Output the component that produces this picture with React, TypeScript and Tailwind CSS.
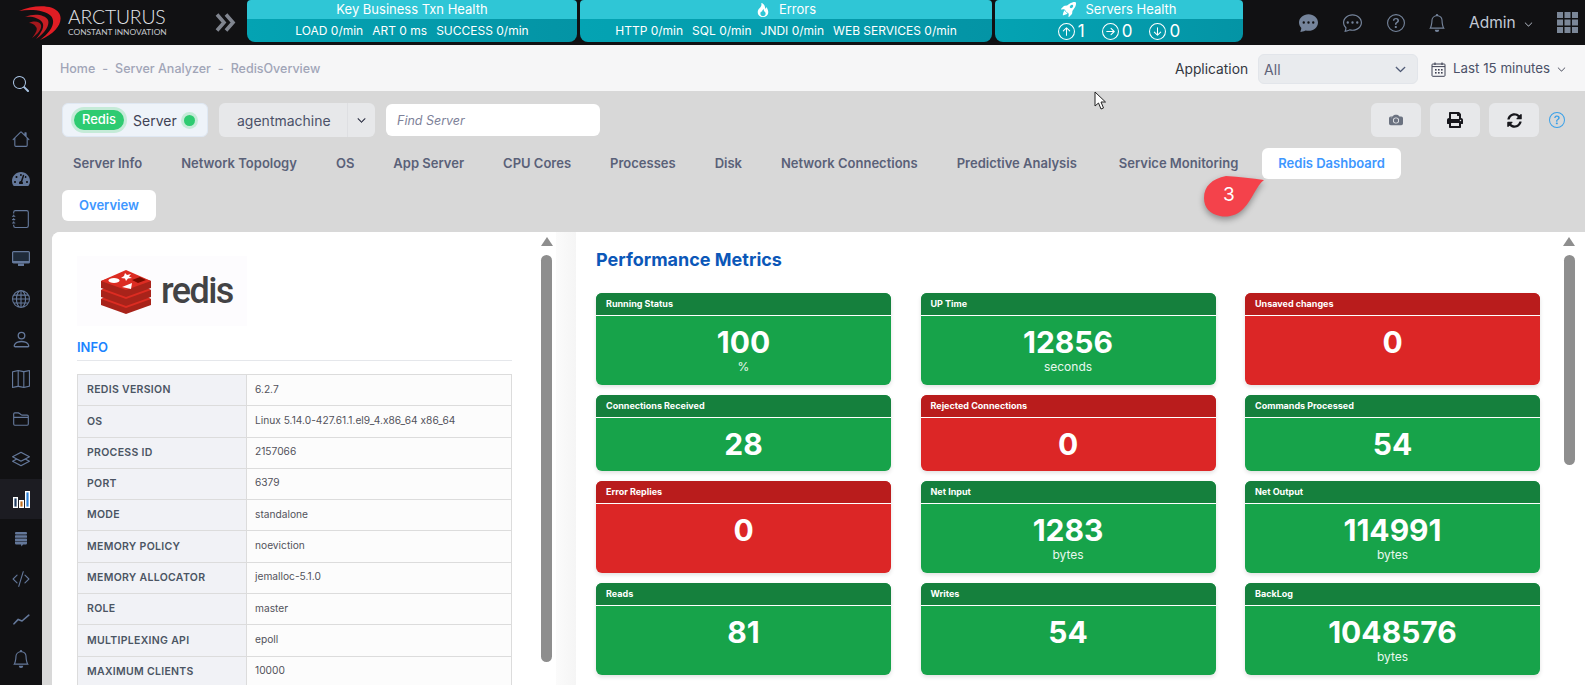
import React from "react";
import { BsChatDotsFill, BsChatDots, BsQuestionCircle, BsBell, BsCameraFill, BsArrowUpCircle, BsArrowRightCircle, BsArrowDownCircle, BsSearch, BsHouse, BsJournal, BsGlobe, BsPerson, BsMap, BsFolder2, BsLayers, BsCodeSlash, BsChevronDown, BsFire, BsRocketTakeoffFill } from "react-icons/bs";
import { FaPrint, FaSyncAlt, FaTachometerAlt } from "react-icons/fa";

const tabs = ["Server Info", "Network Topology", "OS", "App Server", "CPU Cores", "Processes", "Disk", "Network Connections", "Predictive Analysis"];
const info: [string, string][] = [
  ["REDIS VERSION", "6.2.7"],
  ["OS", "Linux 5.14.0-427.61.1.el9_4.x86_64 x86_64"],
  ["PROCESS ID", "2157066"],
  ["PORT", "6379"],
  ["MODE", "standalone"],
  ["MEMORY POLICY", "noeviction"],
  ["MEMORY ALLOCATOR", "jemalloc-5.1.0"],
  ["ROLE", "master"],
  ["MULTIPLEXING API", "epoll"],
  ["MAXIMUM CLIENTS", "10000"],
];
type M = { t: string; v: string; u?: string; red?: boolean };
const metrics: M[] = [
  { t: "Running Status", v: "100", u: "%" },
  { t: "UP Time", v: "12856", u: "seconds" },
  { t: "Unsaved changes", v: "0", red: true },
  { t: "Connections Received", v: "28" },
  { t: "Rejected Connections", v: "0", red: true },
  { t: "Commands Processed", v: "54" },
  { t: "Error Replies", v: "0", red: true },
  { t: "Net Input", v: "1283", u: "bytes" },
  { t: "Net Output", v: "114991", u: "bytes" },
  { t: "Reads", v: "81" },
  { t: "Writes", v: "54" },
  { t: "BackLog", v: "1048576", u: "bytes" },
];

function Swoosh() {
  return (
    <svg width="44" height="36" viewBox="0 0 44 36" className="shrink-0">
      <path d="M0 6 C14 0 34 -1 40 8 C45 16 38 28 21 35 C33 26 37 17 32 11 C26 5 12 4 0 6Z" fill="#e11d24" />
      <path d="M6 12 C16 8 26 10 29 15 C31 20 26 28 17 34 C23 27 26 21 23 17 C20 13 13 11 6 12Z" fill="#c81e24" />
      <path d="M10 18 C16 15 21 17 22 20 C23 24 19 29 13 33 C17 28 19 24 17 22 C15 19 13 18 10 18Z" fill="#a5181d" />
    </svg>
  );
}

function DoubleChevron() {
  return (
    <svg width="21" height="19" viewBox="0 0 21 19" fill="none" stroke="#80858f" strokeWidth="3.6" className="shrink-0">
      <path d="M2 1.5 L9 9.5 L2 17.5" />
      <path d="M11 1.5 L18 9.5 L11 17.5" />
    </svg>
  );
}

function RedisCube() {
  return (
    <svg width="52" height="45" viewBox="0 0 52 45">
      <path d="M1 30 L26 20 L51 30 L51 36 L26 45 L1 36Z" fill="#a8231a" />
      <path d="M1 30 L26 21 L51 30 L26 39Z" fill="#dc2c22" />
      <path d="M1 21 L26 11 L51 21 L51 28 L26 37 L1 28Z" fill="#a8231a" />
      <path d="M1 21 L26 12 L51 21 L26 30Z" fill="#dc2c22" />
      <path d="M1 12 L26 3 L51 12 L51 19 L26 28 L1 19Z" fill="#a8231a" />
      <path d="M1 12 L26 1 L51 12 L26 21Z" fill="#dc2c22" />
      <ellipse cx="14" cy="11.5" rx="5.5" ry="2.5" fill="#fff" />
      <path d="M25 4 L27 6 L31 5 L29 7.5 L32 9 L28 9.5 L26 12 L25 9.5 L21 9 L24 7Z" fill="#fff" />
      <path d="M22 18 L32 14 L31 20Z" fill="#fff" />
      <path d="M32 11 L40 8 L46 11 L38 14Z" fill="#7a0c00" />
    </svg>
  );
}

function CalendarIcon() {
  const xs = [4, 7, 10];
  const ys = [7, 10];
  return (
    <svg width="15" height="15" viewBox="0 0 15 15" fill="none" stroke="#3f4254" className="ml-[13px] shrink-0">
      <rect x="1" y="2" width="13" height="12.3" rx="0.8" strokeWidth="1" />
      <path d="M4 0.5 V3 M11 0.5 V3" strokeWidth="1.2" />
      <path d="M1 4.6 H14" strokeWidth="1" />
      {ys.map((y) => xs.map((x) => <rect key={`${x}-${y}`} x={x} y={y} width="1.6" height="1.6" fill="#3f4254" stroke="none" />))}
    </svg>
  );
}

function BarsIcon() {
  return (
    <svg width="17" height="17" viewBox="0 0 17 17">
      <rect x="0.7" y="6.7" width="3.6" height="9.6" fill="#1e3a5f" stroke="#fff" strokeWidth="1.4" />
      <rect x="6.7" y="9.7" width="3.6" height="6.6" fill="#c2701f" stroke="#fff" strokeWidth="1.4" />
      <rect x="12.7" y="0.7" width="3.6" height="15.6" fill="#2b7fd6" stroke="#fff" strokeWidth="1.4" />
    </svg>
  );
}

function MonitorIcon() {
  return (
    <svg width="18" height="16" viewBox="0 0 18 16">
      <rect x="0.6" y="0.6" width="16.8" height="11.3" rx="1" fill="#1f2b3a" stroke="#64789a" strokeWidth="1.2" />
      <rect x="0.6" y="10" width="16.8" height="2" fill="#64789a" />
      <rect x="6" y="12.5" width="6" height="2.5" fill="#64789a" />
    </svg>
  );
}

function StackIcon() {
  return (
    <svg width="12" height="15" viewBox="0 0 12 15" fill="#64789a">
      <rect x="0" y="0" width="12" height="2.6" rx="1" />
      <rect x="0" y="3.2" width="12" height="2.6" rx="0.6" />
      <rect x="0" y="6.4" width="12" height="2.6" rx="0.6" />
      <path d="M0 9.6 H12 V11.2 Q12 12.4 10.8 12.4 H8 L6.5 14.6 L6 12.4 H1.2 Q0 12.4 0 11.2Z" />
    </svg>
  );
}

function TrendIcon() {
  return (
    <svg width="17" height="11" viewBox="0 0 17 11" fill="none" stroke="#64789a" strokeWidth="1.6" strokeLinecap="round" strokeLinejoin="round">
      <path d="M1 9.8 L5.2 5.4 L9 7 L15.8 1.2" />
    </svg>
  );
}

function GridIcon() {
  const c = [0, 7.5, 15];
  return (
    <svg width="21" height="21" viewBox="0 0 21 21" fill="#7b8798">
      {c.map((y) => c.map((x) => <rect key={`${x}-${y}`} x={x} y={y} width="6" height="6" />))}
    </svg>
  );
}

function Health({ w, title, icon, children }: { w: string; title: string; icon?: React.ReactNode; children: React.ReactNode }) {
  return (
    <div className={`${w} h-[42px] rounded-b-lg rounded-t-sm overflow-hidden flex flex-col text-white`}>
      <div className="h-[19px] bg-[#2fc6d6] flex items-center justify-center gap-[9px] text-[13px] leading-none">
        {icon}
        <span>{title}</span>
      </div>
      <div className="flex-1 bg-gradient-to-r from-[#04a3b3] to-[#0494a5] flex items-center justify-center gap-[9px] text-[12px] leading-none pt-[1px]">
        {children}
      </div>
    </div>
  );
}

function Nav({ children, active }: { children: React.ReactNode; active?: boolean }) {
  return (
    <div className={`h-[40px] flex items-center justify-center text-[18px] text-[#64789a] ${active ? "bg-[#1c1c22]" : ""}`}>{children}</div>
  );
}

function Metric({ m }: { m: M }) {
  return (
    <div className={`rounded-md overflow-hidden flex flex-col text-white shadow-[0_2px_4px_rgba(0,0,0,0.12)] ${m.red ? "bg-[#dc2626]" : "bg-[#17a34a]"}`}>
      <div className={`h-[23px] shrink-0 px-[10px] flex items-center border-b border-white text-[9px] font-bold ${m.red ? "bg-[#b91c1c]" : "bg-[#15803d]"}`}>{m.t}</div>
      <div className="flex-1 flex flex-col items-center pt-[8px] pb-[9px]">
        <div className="text-[30px] font-bold leading-[36px]">{m.v}</div>
        {m.u && <div className="text-[12px] leading-[16px] mt-[-1px] mb-[1px] text-[#e8f8ee]">{m.u}</div>}
      </div>
    </div>
  );
}

export default function App() {
  return (
    <div className="w-[1585px] h-[685px] overflow-hidden flex flex-col relative font-['Inter',sans-serif] bg-[#111113]">
      <header className="h-[45px] shrink-0 flex bg-[#111113]">
        <div className="w-[247px] shrink-0 flex items-center pl-[19px]">
          <Swoosh />
          <div className="ml-[5px] w-[100px] flex flex-col text-[#e5e7eb] font-['Lato',sans-serif] whitespace-nowrap pb-[2px]">
            <span className="text-[19.4px] font-light leading-[20px] tracking-[-0.2px]">ARCTURUS</span>
            <span className="text-[8.4px] leading-[10px] text-[#c4c7cc]">CONSTANT INNOVATION</span>
          </div>
          <span className="ml-[47px]"><DoubleChevron /></span>
        </div>
        <div className="flex gap-[3px]">
          <Health w="w-[330px]" title="Key Business Txn Health">
            <span>LOAD 0/min</span><span>ART 0 ms</span><span>SUCCESS 0/min</span>
          </Health>
          <Health w="w-[412px]" title="Errors" icon={<BsFire className="text-[14px]" />}>
            <span>HTTP 0/min</span><span>SQL 0/min</span><span>JNDI 0/min</span><span>WEB SERVICES 0/min</span>
          </Health>
          <Health w="w-[248px]" title="Servers Health" icon={<BsRocketTakeoffFill className="text-[15px]" />}>
            <span className="flex items-center gap-[3px] text-[17px]"><BsArrowUpCircle className="text-[17px]" />1</span>
            <span className="flex items-center gap-[3px] text-[17px] ml-[8px]"><BsArrowRightCircle className="text-[17px]" />0</span>
            <span className="flex items-center gap-[3px] text-[17px] ml-[8px]"><BsArrowDownCircle className="text-[17px]" />0</span>
          </Health>
        </div>
        <div className="flex items-center text-[#75849b] ml-[56px]">
          <BsChatDotsFill className="text-[19px]" />
          <BsChatDots className="text-[19px] ml-[25px]" />
          <BsQuestionCircle className="text-[18px] ml-[25px]" />
          <BsBell className="text-[18px] ml-[23px]" />
          <span className="ml-[23px] text-[15.5px] text-[#c3cad6]">Admin</span>
          <BsChevronDown className="text-[9px] ml-[8px] mt-[3px] text-[#c3cad6]" />
          <span className="ml-[24px]"><GridIcon /></span>
        </div>
      </header>

      <div className="flex-1 flex min-h-0">
        <aside className="w-[42px] shrink-0 bg-[#111113] flex flex-col pt-[19px]">
          <div className="mb-[15px]"><Nav><BsSearch className="text-[16px] text-[#a9c4e4]" /></Nav></div>
          <Nav><BsHouse /></Nav>
          <Nav><FaTachometerAlt /></Nav>
          <Nav><BsJournal /></Nav>
          <Nav><MonitorIcon /></Nav>
          <Nav><BsGlobe /></Nav>
          <Nav><BsPerson className="text-[21px]" /></Nav>
          <Nav><BsMap /></Nav>
          <Nav><BsFolder2 /></Nav>
          <Nav><BsLayers /></Nav>
          <Nav active><BarsIcon /></Nav>
          <Nav><StackIcon /></Nav>
          <Nav><BsCodeSlash /></Nav>
          <Nav><TrendIcon /></Nav>
          <Nav><BsBell /></Nav>
        </aside>

        <main className="flex-1 min-w-0 bg-[#d8d8d8] flex flex-col">
          <div className="h-[46px] shrink-0 bg-[#f6f6f7] flex items-center pt-[2px] pl-[18px] pr-[17px]">
            <div className="flex gap-[7px] text-[12.5px] font-medium text-[#a1a5b7]">
              <span>Home</span><span>-</span><span>Server Analyzer</span><span>-</span><span>RedisOverview</span>
            </div>
            <span className="ml-auto text-[13.8px] text-[#33363f]">Application</span>
            <div className="ml-[10px] w-[160px] h-[30px] rounded-md bg-[#e9ebee] border border-[#e2e5ea] flex items-center justify-between px-[5px] pr-[11px] text-[14px] text-[#5e6278]">
              <span>All</span>
              <BsChevronDown className="text-[11px] text-[#3f4a68] stroke-[1px]" />
            </div>
            <CalendarIcon />
            <span className="ml-[7px] text-[13.3px] text-[#4b5168]">Last 15 minutes</span>
            <BsChevronDown className="ml-[7px] mr-[2px] text-[9px] text-[#3f4254]" />
          </div>

          <div className="mt-[12px] h-[34px] shrink-0 flex items-center pl-[20px] pr-[20px]">
            <div className="w-[146px] h-[34px] rounded-md bg-[#eef3f9] border border-[#dfe8f3] flex items-center pl-[11px]">
              <span className="h-[20px] w-[50px] rounded-full bg-[#2ecb71] text-white text-[13px] font-medium flex items-center justify-center ring-[3px] ring-[#c5ebd8]">Redis</span>
              <span className="ml-[9px] text-[14px] text-[#3f4254] pt-[1px]">Server</span>
              <span className="ml-[7px] w-[11px] h-[11px] rounded-full bg-[#2ecb71] ring-[3px] ring-[#c5ebd8]"></span>
            </div>
            <div className="ml-[11px] w-[156px] h-[34px] rounded-md bg-[#e7e8ea] flex items-center">
              <span className="w-[129px] h-full flex items-center pl-[18px] text-[14px] text-[#4b5168] border-r border-[#dedfe2]">agentmachine</span>
              <span className="flex-1 flex justify-center"><BsChevronDown className="text-[9px] text-[#3f4254] stroke-[1.5px]" /></span>
            </div>
            <div className="ml-[11px] w-[214px] h-[32px] rounded-md bg-white flex items-center pl-[11px] pt-[3px] text-[12.5px] italic text-[#7e8299]">Find Server</div>
            <div className="ml-auto flex gap-[9px] items-center">
              <div className="w-[50px] h-[34px] rounded-md bg-[#e7e8ea] flex items-center justify-center text-[14px] text-[#6b7280]"><BsCameraFill /></div>
              <div className="w-[50px] h-[34px] rounded-md bg-[#e7e8ea] flex items-center justify-center text-[16px] text-[#17171c]"><FaPrint /></div>
              <div className="w-[50px] h-[34px] rounded-md bg-[#e7e8ea] flex items-center justify-center text-[15px] text-[#17171c]"><FaSyncAlt /></div>
              <BsQuestionCircle className="ml-[1px] text-[16px] text-[#3aa0e8]" />
            </div>
          </div>

          <div className="mt-[11px] h-[31px] shrink-0 flex items-center gap-[7px] pl-[15px] text-[13px] font-semibold text-[#5a6178] whitespace-nowrap">
            {tabs.map((t) => (
              <span key={t} className="px-[16px] leading-[31px]">{t}</span>
            ))}
            <span className="ml-[3px] px-[16px] leading-[31px]">Service Monitoring</span>
            <span className="ml-[1px] px-[16px] leading-[31px] rounded-md bg-white text-[#3e97ff]">Redis Dashboard</span>
          </div>

          <div className="mt-[11px] h-[31px] shrink-0 pl-[20px] flex">
            <span className="px-[17px] leading-[31px] rounded-md bg-white text-[13px] font-semibold text-[#3e97ff]">Overview</span>
          </div>

          <div className="mt-[11px] flex-1 min-h-0 flex ml-[10px] overflow-hidden">
            <section className="w-[524px] shrink-0 relative bg-white rounded-tl-lg overflow-hidden flex">
              <div className="w-[504px] bg-white pl-[25px] pr-[44px] pt-[24px]">
                <div className="w-[170px] h-[70px] bg-[#fdfcfe] flex items-center pl-[23px]">
                  <RedisCube />
                  <span className="ml-[9px] text-[36px] font-['Roboto',sans-serif] font-medium leading-none tracking-[-1.6px] text-[#434345]">redis</span>
                </div>
                <div className="mt-[11px] pb-[3px] border-b border-[#e5e7eb] text-[13px] font-semibold leading-[20px] text-[#1b84ff]">INFO</div>
                <table className="mt-[13px] w-[435px] border-collapse text-[10.2px] table-fixed [font-feature-settings:'calt'_0]">
                  <tbody>
                    {info.map(([k, v]) => (
                      <tr key={k} className="h-[31.3px]">
                        <td className="w-[169px] border border-[#dcdcdc] bg-[#f1f2f6] pl-[9px] text-[10.5px] font-semibold tracking-[0.3px] text-[#4b5563]">{k}</td>
                        <td className="border border-[#dcdcdc] bg-[#fcfcfc] pl-[8px] pb-[2px] text-[#52525b]">{v}</td>
                      </tr>
                    ))}
                  </tbody>
                </table>
              </div>
              <div className="flex-1 bg-gradient-to-r from-[#fbfbfb] to-[#f5f5f5]"></div>
              <div className="absolute left-[489px] top-[5px] w-0 h-0 border-l-[6px] border-r-[6px] border-b-[9px] border-l-transparent border-r-transparent border-b-[#8e8e8e]"></div>
              <div className="absolute left-[489px] top-[23px] w-[11px] h-[407px] rounded-full bg-[#8e8e8e]"></div>
            </section>
            <section className="flex-1 relative bg-white pl-[20px] pt-[15px]">
              <h2 className="text-[18px] font-bold leading-[26px] text-[#0b57b8]">Performance Metrics</h2>
              <div className="mt-[20px] grid grid-cols-[295px_295px_295px] gap-x-[29.5px] gap-y-[10px] auto-rows-min">
                {metrics.map((m) => (
                  <Metric key={m.t} m={m} />
                ))}
              </div>
              <div className="absolute right-[10px] top-[5px] w-0 h-0 border-l-[6px] border-r-[6px] border-b-[9px] border-l-transparent border-r-transparent border-b-[#8e8e8e]"></div>
              <div className="absolute right-[10px] top-[23px] w-[11px] h-[210px] rounded-full bg-[#8e8e8e]"></div>
            </section>
          </div>
        </main>
      </div>

      <div className="absolute left-[1200px] top-[176px] w-[68px] h-[46px]">
        <svg width="68" height="46" viewBox="0 0 68 46" className="drop-shadow-[0_3px_3px_rgba(0,0,0,0.35)]">
          <path d="M4 22 C4 10 12 3 26 0 C40 1 52 2 64 4 C56 10 52 24 44 32 C38 39 28 42 20 40 C10 38 4 32 4 22Z" fill="#f4424b" />
        </svg>
        <span className="absolute left-[23px] top-[7px] text-[19px] leading-[24px] text-white">3</span>
      </div>

      <svg width="13" height="20" viewBox="0 0 13 20" className="absolute left-[1094px] top-[91px]">
        <path d="M1 1 L1 15 L4.5 12 L7 18 L9.5 17 L7 11 L11.5 11Z" fill="#fff" stroke="#222" strokeWidth="1" />
      </svg>
    </div>
  );
}
